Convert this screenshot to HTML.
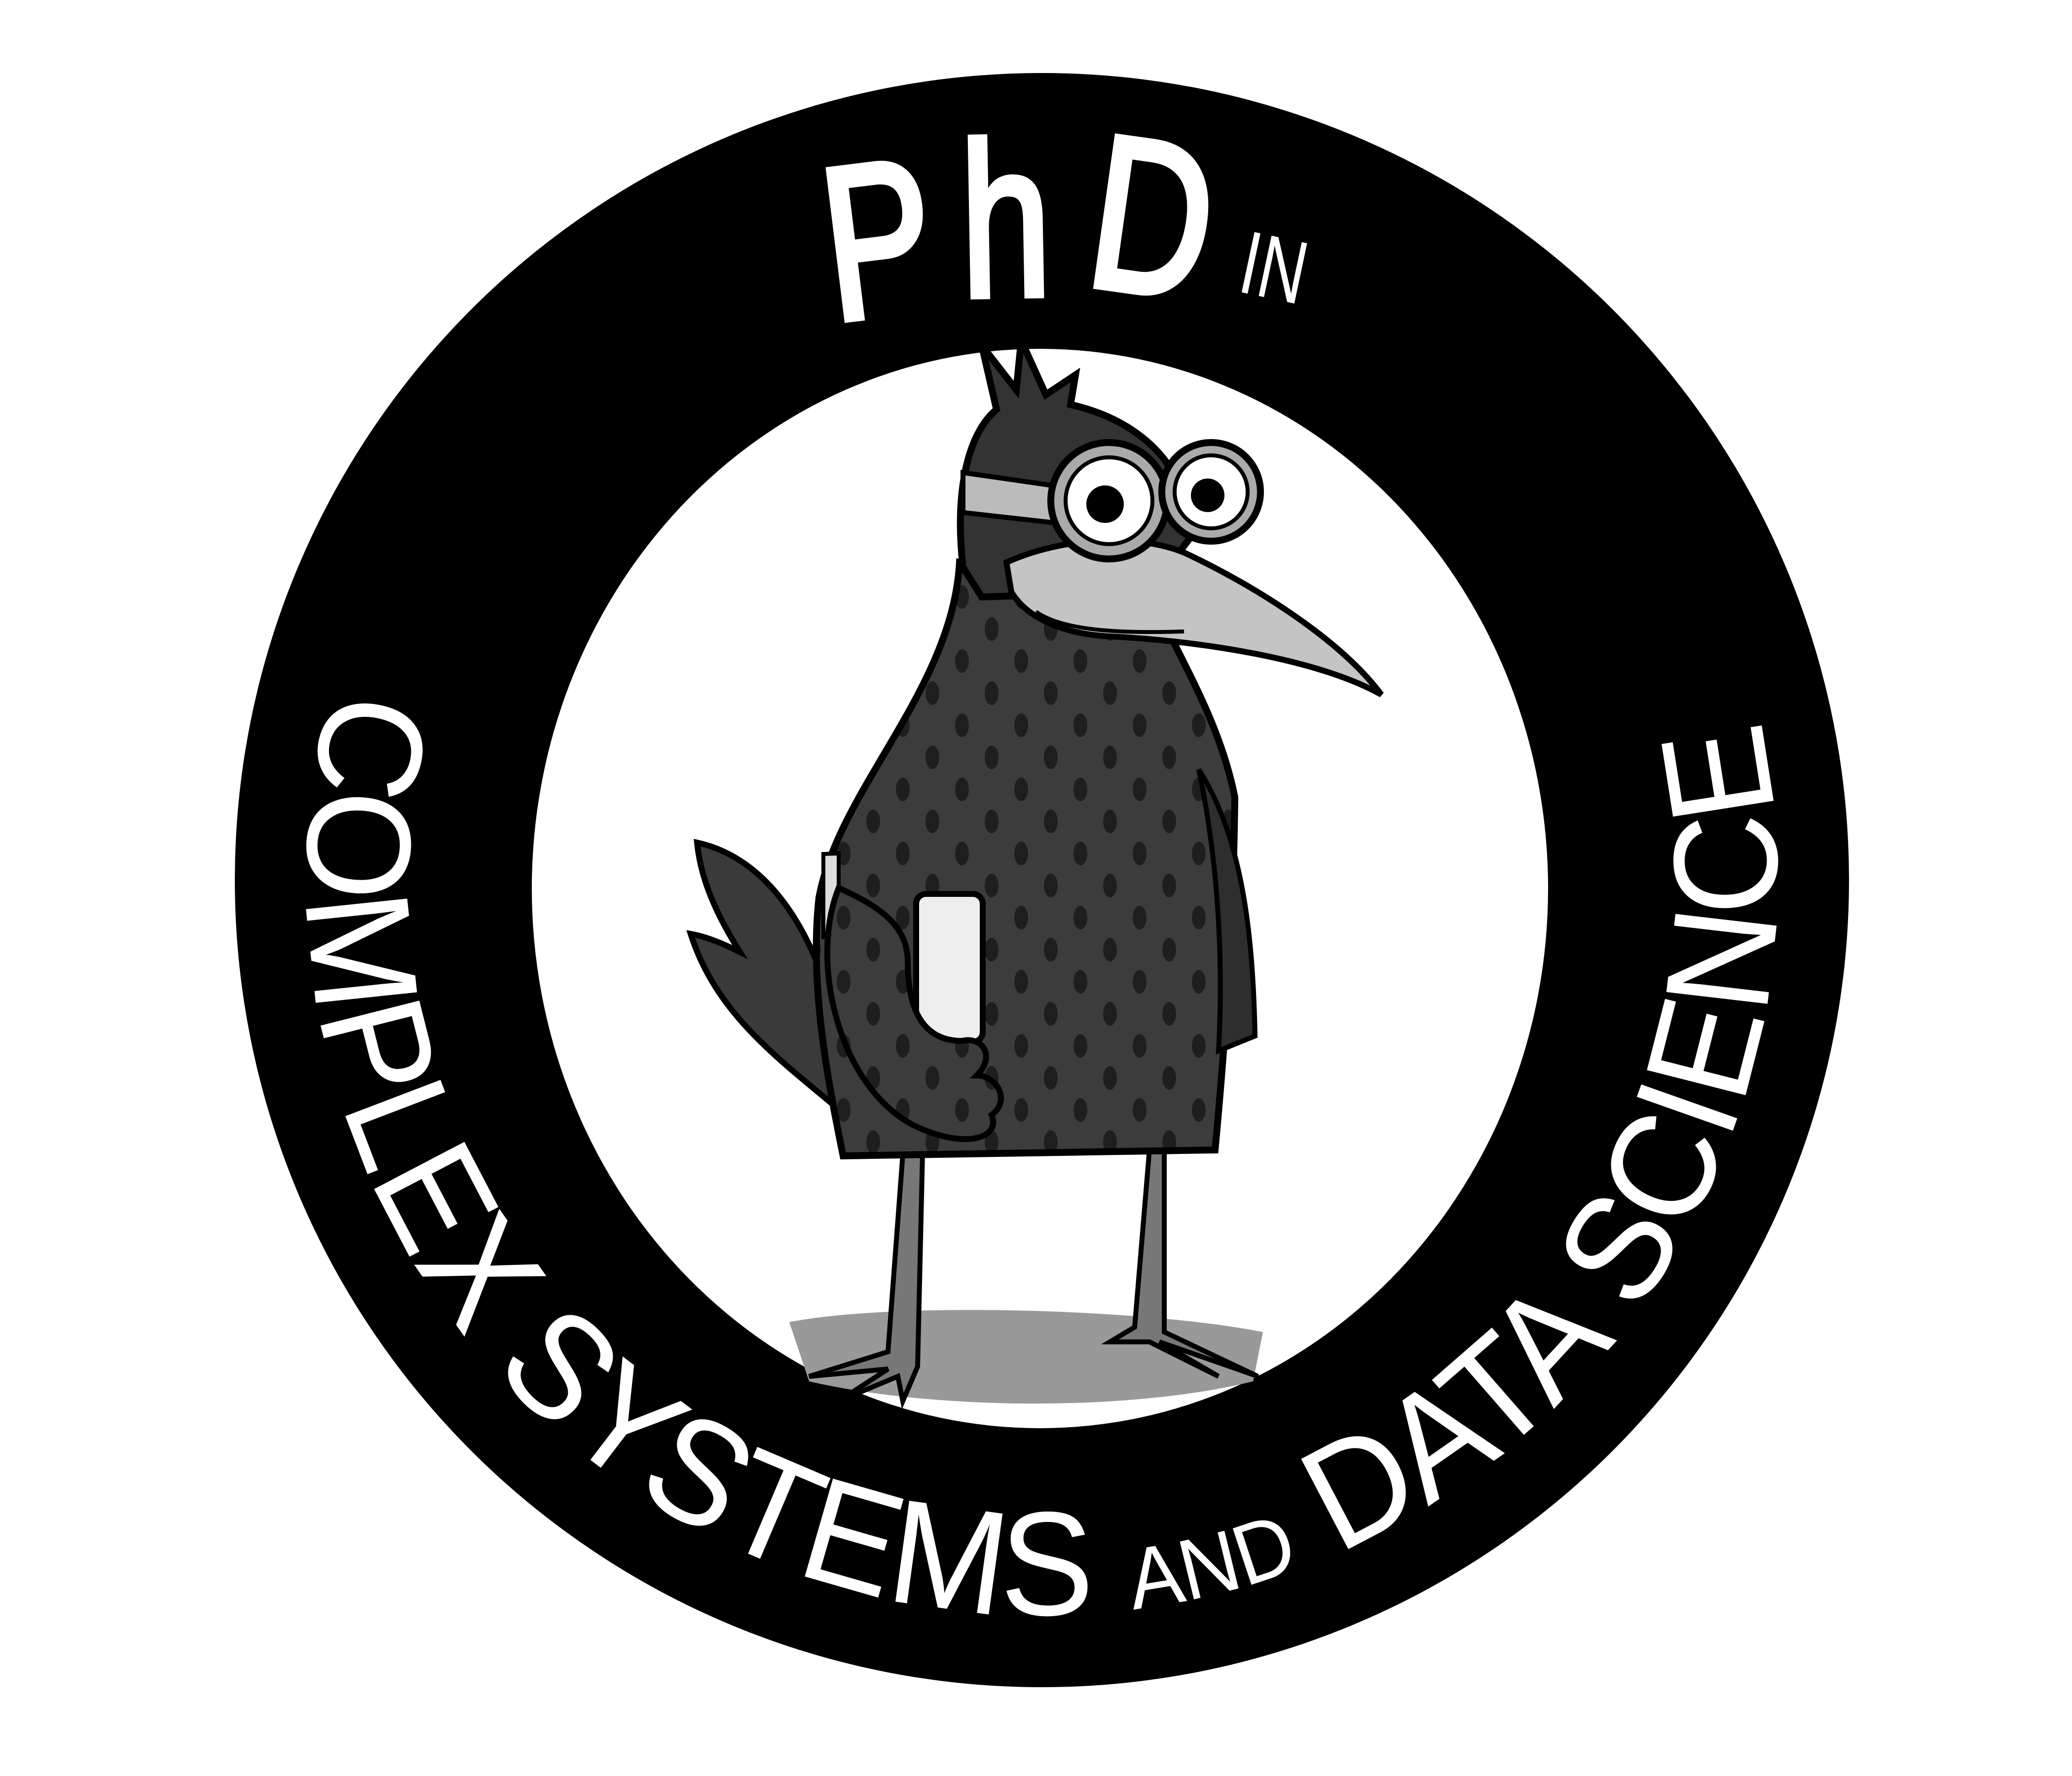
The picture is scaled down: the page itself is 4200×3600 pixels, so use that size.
<!DOCTYPE html>
<html><head><meta charset="utf-8"><style>
html,body{margin:0;padding:0;background:#fff;}
svg{display:block}
</style></head><body>
<svg width="4200" height="3600" viewBox="0 0 4200 3600" xmlns="http://www.w3.org/2000/svg">
<defs>
<path id="arc" d="M 676 1386 A 1490 1490 0 1 0 3564 1449"/>
<pattern id="spots" width="120" height="130" patternUnits="userSpaceOnUse">
<rect width="120" height="130" fill="#3c3c3c"/>
<ellipse cx="30" cy="40" rx="14" ry="24" fill="#1e1e1e"/>
<ellipse cx="90" cy="105" rx="14" ry="24" fill="#1e1e1e"/>
</pattern>
</defs>
<rect width="4200" height="3600" fill="#fff"/>
<circle cx="2112" cy="1784" r="1636" fill="#000"/>
<ellipse cx="2108" cy="1801" rx="1030" ry="1094" fill="#fff"/>

<g font-family="Liberation Sans, sans-serif" font-size="420" fill="#fff" stroke="#fff" stroke-width="14">
<text transform="translate(1690 650) rotate(-7) scale(0.78 1.05)">P</text>
<text transform="translate(1950 600) rotate(-1) scale(0.78 1.05)">h</text>
<text transform="translate(2195 575) rotate(8) scale(0.8 1.05)">D</text>
</g>
<text transform="translate(2505 590) rotate(12) scale(0.8 1.1)" font-family="Liberation Sans, sans-serif" font-size="165" fill="#fff">IN</text>

<text font-family="Liberation Sans, sans-serif" font-size="300" fill="#fff">
<textPath href="#arc" startOffset="10" textLength="5400" lengthAdjust="spacingAndGlyphs">COMPLEX SYSTEMS <tspan font-size="175">AND</tspan> DATA SCIENCE</textPath>
</text>

<!-- crow -->
<path d="M1600 2680 C1800 2640 2300 2650 2560 2700 L2540 2800 C2300 2860 1900 2860 1640 2800 Z" fill="#999"/>
<path d="M1830 2340 L1800 2740 L1640 2790 L1800 2775 L1700 2840 L1820 2790 L1830 2840 L1860 2770 L1870 2340 Z" fill="#777" stroke="#000" stroke-width="10"/>
<path d="M2330 2330 L2300 2690 L2250 2720 L2330 2720 L2470 2790 L2350 2720 L2550 2790 L2360 2700 L2360 2330 Z" fill="#777" stroke="#000" stroke-width="10"/>
<path d="M1413 1708 C1560 1740 1680 1900 1723 2216 L1690 2240 C1570 2140 1450 2050 1400 1893 C1440 1900 1480 1920 1500 1930 C1450 1850 1420 1780 1413 1708 Z" fill="#3a3a3a" stroke="#000" stroke-width="12"/>
<path d="M1945 1140 C1930 1400 1700 1600 1660 1820 C1640 2000 1680 2200 1709 2343 L2463 2331 C2480 2150 2500 1900 2503 1616 C2470 1450 2380 1320 2342 1220 Z" fill="url(#spots)" stroke="#000" stroke-width="14"/>
<path d="M2430 1560 C2520 1700 2540 1900 2544 2100 L2470 2130 C2480 1950 2470 1750 2430 1560 Z" fill="#2e2e2e" stroke="#000" stroke-width="10"/>
<path d="M1952 1150 C1935 1000 1960 880 2020 830 L1990 700 L2060 790 L2070 690 L2120 800 L2180 760 L2170 820 C2300 850 2400 930 2420 1080 L2330 1200 L1990 1210 Z" fill="#333" stroke="#000" stroke-width="14"/>
<path d="M1952 958 L2140 985 L2140 1060 L1952 1039 Z" fill="#bbb" stroke="#000" stroke-width="10"/>
<path d="M2040 1140 C2150 1090 2300 1080 2400 1120 C2550 1190 2720 1300 2800 1408 C2680 1340 2450 1300 2250 1290 C2150 1285 2080 1250 2050 1200 Z" fill="#c4c4c4" stroke="#000" stroke-width="12"/>
<path d="M2100 1240 C2150 1275 2250 1285 2400 1280" fill="none" stroke="#000" stroke-width="8"/>
<circle cx="2248" cy="1015" r="118" fill="#aaa" stroke="#000" stroke-width="14"/>
<circle cx="2248" cy="1015" r="88" fill="#fff" stroke="#000" stroke-width="8"/>
<circle cx="2240" cy="1022" r="38" fill="#000"/>
<circle cx="2455" cy="997" r="100" fill="#aaa" stroke="#000" stroke-width="14"/>
<circle cx="2455" cy="997" r="74" fill="#fff" stroke="#000" stroke-width="8"/>
<circle cx="2448" cy="1004" r="34" fill="#000"/>
<path d="M1669 1731 L1700 1730 L1700 1900 L1669 1900 Z" fill="#ddd" stroke="#000" stroke-width="8"/>
<rect x="1857" y="1812" width="135" height="300" rx="20" fill="#eee" stroke="#000" stroke-width="12"/>
<path d="M1700 1800 C1640 1950 1700 2200 1850 2280 C1950 2330 2030 2310 2010 2260 C2050 2230 2020 2180 1980 2180 C2020 2140 1990 2100 1950 2110 C1880 2110 1840 2060 1840 1950 C1840 1880 1790 1840 1700 1800 Z" fill="url(#spots)" stroke="#000" stroke-width="12"/>
</svg>
</body></html>
